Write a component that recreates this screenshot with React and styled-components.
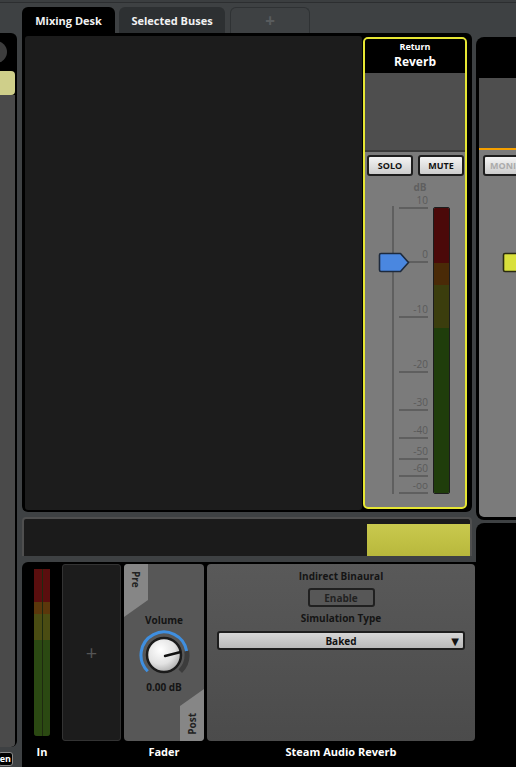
import React from "react";
import styled, { createGlobalStyle } from "styled-components";

const GlobalStyle = createGlobalStyle`
  html, body {
    margin: 0;
    padding: 0;
    background: #3e4143;
    overflow: hidden;
  }
  * { box-sizing: border-box; }
  body {
    font-family: "Open Sans", "DejaVu Sans", sans-serif;
  }
`;

const Page = styled.div`
  width: 516px;
  height: 767px;
  overflow: hidden;
  display: flex;
  flex-direction: column;
  background: #3e4143;
`;

const TopRule = styled.div`
  height: 3px;
  background: #3b3e40;
  border-bottom: 1px solid #2c2e30;
`;

const Columns = styled.div`
  flex: 1;
  display: flex;
  min-height: 0;
`;

/* ---------- left column ---------- */

const LeftCol = styled.div`
  width: 17px;
  flex-shrink: 0;
  display: flex;
  flex-direction: column;
`;

const SidePanel = styled.div`
  margin-top: 30px;
  height: 714px;
  background: #000;
  border-radius: 0 6px 6px 0;
  padding-right: 2px;
  display: flex;
  flex-direction: column;
  overflow: hidden;
`;

const SideTop = styled.div`
  height: 38px;
  display: flex;
  align-items: center;
`;

const SideCircle = styled.div`
  width: 22px;
  height: 22px;
  margin-left: -15px;
  border-radius: 50%;
  background: #3d3d3d;
`;

const SideTab = styled.div`
  height: 24px;
  background: #cfcf8a;
  border-radius: 0 4px 4px 0;
`;

const SideFill = styled.div`
  flex: 1;
  background: #4a4a4a;
  border-radius: 0 0 4px 0;
`;

const SideButton = styled.div`
  margin-top: 5px;
  margin-left: -2px;
  width: 15px;
  height: 14px;
  background: #000;
  border: 1px solid #8a8a8a;
  border-radius: 3px;
  color: #fff;
  font-size: 9px;
  font-weight: 700;
  line-height: 12px;
  text-align: right;
  padding-right: 1px;
`;

/* ---------- main column ---------- */

const MainCol = styled.div`
  width: 454px;
  margin-left: 5px;
  flex-shrink: 0;
  display: flex;
  flex-direction: column;
`;

const TabRow = styled.div`
  margin-top: 4px;
  height: 26px;
  display: flex;
  gap: 4px;
`;

const Tab = styled.div`
  width: ${(p) => p.$w}px;
  height: 26px;
  border-radius: 6px 6px 0 0;
  background: ${(p) => (p.$active ? "#000" : p.$ghost ? "transparent" : "#2d3032")};
  border: ${(p) => (p.$ghost ? "1px solid #2f3234" : "none")};
  border-bottom: none;
  color: ${(p) => (p.$ghost ? "#595c5e" : "#f2f2f2")};
  font-size: ${(p) => (p.$ghost ? "17px" : "11px")};
  font-weight: 700;
  display: flex;
  align-items: center;
  justify-content: center;
  margin-left: ${(p) => p.$ml || 0}px;
`;

const MixerPanel = styled.div`
  width: 450px;
  height: 479px;
  background: #000;
  border-radius: 0 6px 6px 6px;
  padding: 3px 5px 2px 3px;
  display: flex;
  gap: 1px;
`;

const DarkArea = styled.div`
  flex: 1;
  background: #1c1c1c;
  border-radius: 3px;
`;

/* ---------- channel strip ---------- */

const Strip = styled.div`
  width: 104px;
  margin: 1px 0;
  border: 2px solid #e6e633;
  border-radius: 5px;
  overflow: hidden;
  background: #7b7b7b;
  display: flex;
  flex-direction: column;
`;

const StripHeader = styled.div`
  height: 34px;
  background: #000;
  color: #fff;
  font-weight: 700;
  display: flex;
  flex-direction: column;
  align-items: center;
  padding-top: 2px;
`;

const SmallName = styled.div`
  font-size: 9px;
  line-height: 11px;
`;

const BigName = styled.div`
  margin-top: 2px;
  font-size: 12px;
  line-height: 15px;
`;

const StripSpace = styled.div`
  height: ${(p) => p.$h}px;
  background: #4e4e4e;
  border-bottom: 2px solid ${(p) => p.$line || "#3a3a3a"};
`;

const ButtonRow = styled.div`
  display: flex;
  gap: 5px;
  padding: 3px 0 4px 2px;
`;

const StripButton = styled.div`
  width: 46px;
  height: 21px;
  border: 2px solid #1d1d1d;
  border-radius: 3px;
  background: linear-gradient(#f4f4f4, #cdcdcd);
  color: ${(p) => (p.$disabled ? "#ababab" : "#111")};
  font-size: 9px;
  font-weight: 700;
  display: flex;
  align-items: center;
  justify-content: ${(p) => (p.$disabled ? "flex-start" : "center")};
  padding-left: ${(p) => (p.$disabled ? "5px" : "0")};
  flex-shrink: 0;
  white-space: nowrap;
`;

const FaderArea = styled.div`
  position: relative;
  height: 320px;
`;

const DbLabel = styled.div`
  position: absolute;
  left: 45px;
  top: 1px;
  width: 20px;
  text-align: center;
  font-size: 10px;
  font-weight: 700;
  line-height: 12px;
  color: #5f5f5f;
`;

const FaderLine = styled.div`
  position: absolute;
  left: 27px;
  top: 26px;
  width: 2px;
  height: 288px;
  background: #5f5f5f;
`;

const Tick = styled.div`
  position: absolute;
  left: 34px;
  width: 29px;
  height: 2px;
  background: #5f5f5f;
`;

const TickLabel = styled.div`
  position: absolute;
  right: 37px;
  font-size: 10px;
  line-height: 12px;
  color: #5a5a5a;
`;

const Meter = styled.div`
  position: absolute;
  left: 68px;
  top: 27px;
  width: 17px;
  height: 287px;
  border: 1px solid #1c1c1c;
  border-radius: 2px;
  overflow: hidden;
  display: flex;
  flex-direction: column;
`;

const MeterSeg = styled.div`
  flex: ${(p) => p.$f};
  background: ${(p) => p.$c};
`;

const HandleSpot = styled.div`
  position: absolute;
  left: 13px;
  top: 72px;
  width: 32px;
  height: 21px;
`;

/* ---------- right column ---------- */

const RightCol = styled.div`
  width: 60px;
  flex-shrink: 0;
  display: flex;
  flex-direction: column;
`;

const RightStrip = styled.div`
  margin-top: 34px;
  height: 483px;
  background: #000;
  border-radius: 8px 0 0 8px;
  padding: 0 0 3px 3px;
  display: flex;
  flex-direction: column;
`;

const RightHeader = styled.div`
  height: 41px;
`;

const RightBody = styled.div`
  flex: 1;
  background: #7b7b7b;
  border-radius: 0 0 0 5px;
  padding: 5px 0 0 4px;
`;

const RightHandle = styled.div`
  margin: 76px 0 0 19px;
  width: 32px;
  height: 21px;
`;

const RightBottom = styled.div`
  margin-top: 3px;
  flex: 1;
  background: #000;
  border-radius: 8px 0 0 0;
`;

/* ---------- bus bar ---------- */

const BusBar = styled.div`
  margin-top: 5px;
  width: 450px;
  height: 39px;
  background: #1b1b1b;
  border: 2px solid #4f4f4f;
  border-bottom: none;
  border-radius: 4px 4px 0 0;
  display: flex;
  justify-content: flex-end;
  align-items: flex-end;
`;

const BusFill = styled.div`
  width: 103px;
  height: 32px;
  background: linear-gradient(#c9c94e, #b8b83c);
`;

/* ---------- bottom section ---------- */

const BottomSection = styled.div`
  margin-top: 6px;
  flex: 1;
  background: #000;
  border-radius: 6px 0 0 0;
  padding-top: 2px;
  display: flex;
  align-items: flex-start;
`;

const ModuleCol = styled.div`
  display: flex;
  flex-direction: column;
  width: ${(p) => p.$w}px;
  margin-left: ${(p) => p.$ml || 0}px;
  padding: ${(p) => p.$pad || "0"};
  flex-shrink: 0;
`;

const ModuleLabel = styled.div`
  margin-top: 4px;
  text-align: center;
  color: #fff;
  font-size: 11px;
  font-weight: 700;
  line-height: 14px;
`;

const InMeter = styled.div`
  margin-top: 5px;
  height: 167px;
  margin-bottom: 5px;
  display: flex;
  gap: 1px;
  background: #1e2a10;
  border-radius: 0 0 3px 3px;
  overflow: hidden;
`;

const InBar = styled.div`
  flex: 1;
  display: flex;
  flex-direction: column;
`;

const PlusSlot = styled.div`
  height: 177px;
  background: #1c1c1c;
  border: 1px solid #333;
  border-radius: 3px;
  color: #555;
  font-size: 20px;
  display: flex;
  align-items: center;
  justify-content: center;
`;

const FaderBox = styled.div`
  position: relative;
  height: 177px;
  background: #575757;
  border-radius: 4px;
  overflow: hidden;
  display: flex;
  flex-direction: column;
  align-items: center;
  padding-top: 50px;
`;

const CornerTab = styled.div`
  position: absolute;
  width: 24px;
  background: #868686;
  display: flex;
  justify-content: center;
`;

const PreTab = styled(CornerTab)`
  left: 0;
  top: 0;
  height: 53px;
  clip-path: polygon(0 0, 100% 0, 100% 36px, 0 100%);
  align-items: flex-start;
  padding-top: 7px;
`;

const PostTab = styled(CornerTab)`
  right: 0;
  bottom: 0;
  height: 52px;
  clip-path: polygon(0 17px, 100% 0, 100% 100%, 0 100%);
  align-items: flex-end;
  padding-bottom: 6px;
`;

const TabText = styled.span`
  writing-mode: vertical-rl;
  transform: ${(p) => (p.$up ? "rotate(180deg)" : "none")};
  font-size: 10px;
  font-weight: 700;
  color: #222;
  line-height: 12px;
`;

const SmallText = styled.div`
  font-size: 10px;
  font-weight: 700;
  color: #141414;
  line-height: 12px;
  margin-top: ${(p) => p.$mt || 0}px;
`;

const KnobWrap = styled.div`
  margin-top: 3px;
  width: 52px;
  height: 52px;
`;

const SteamBox = styled.div`
  height: 177px;
  background: linear-gradient(#595959, #4b4b4b);
  border-radius: 4px;
  display: flex;
  flex-direction: column;
  align-items: center;
  padding: 6px 10px 0 10px;
`;

const EnableButton = styled.div`
  margin-top: 6px;
  width: 67px;
  height: 19px;
  border: 2px solid #202020;
  border-radius: 3px;
  background: #575757;
  font-size: 10px;
  font-weight: 700;
  color: #222;
  display: flex;
  align-items: center;
  justify-content: center;
`;

const Dropdown = styled.div`
  position: relative;
  margin-top: 7px;
  width: 100%;
  height: 19px;
  border: 2px solid #1d1d1d;
  border-radius: 3px;
  background: linear-gradient(#d6d6d6, #b9b9b9);
  font-size: 10px;
  font-weight: 700;
  color: #111;
  display: flex;
  align-items: center;
  justify-content: center;
`;

const Caret = styled.span`
  position: absolute;
  right: 4px;
  top: 1px;
  font-size: 10px;
  color: #111;
`;

/* ---------- drawings ---------- */

const FaderHandle = ({ color, edge }) => (
  <svg width="32" height="21" viewBox="0 0 32 21">
    <path
      d="M3 1.5 H22.5 L30.5 10.5 L22.5 19.5 H3 Q1.5 19.5 1.5 18 V3 Q1.5 1.5 3 1.5 Z"
      fill={color}
      stroke={edge}
      strokeWidth="1.6"
      strokeLinejoin="round"
    />
  </svg>
);

const polar = (deg, r) => {
  const a = (deg * Math.PI) / 180;
  return [26 + r * Math.sin(a), 26 - r * Math.cos(a)];
};

const Knob = ({ value }) => {
  const r = 23;
  const [sx, sy] = polar(-135, r);
  const [vx, vy] = polar(value, r);
  const [ex, ey] = polar(135, r);
  const [px, py] = polar(value, 16);
  return (
    <svg width="52" height="52" viewBox="0 0 52 52">
      <defs>
        <radialGradient id="knobFace" cx="40%" cy="35%" r="70%">
          <stop offset="0%" stopColor="#ffffff" />
          <stop offset="60%" stopColor="#e2e2e2" />
          <stop offset="100%" stopColor="#a8a8a8" />
        </radialGradient>
      </defs>
      <path d={`M${vx} ${vy} A${r} ${r} 0 0 1 ${ex} ${ey}`} fill="none" stroke="#3c3c3c" strokeWidth="5" />
      <path d={`M${sx} ${sy} A${r} ${r} 0 1 1 ${vx} ${vy}`} fill="none" stroke="#3f8fe0" strokeWidth="3" />
      <circle cx="26" cy="26" r="17" fill="url(#knobFace)" stroke="#1b1b1b" strokeWidth="2.5" />
      <line x1="27" y1="27" x2={px} y2={py} stroke="#111" strokeWidth="2.4" strokeLinecap="round" />
    </svg>
  );
};

const ticks = [
  { label: "10", y: 28 },
  { label: "0", y: 82 },
  { label: "-10", y: 137 },
  { label: "-20", y: 192 },
  { label: "-30", y: 230 },
  { label: "-40", y: 258 },
  { label: "-50", y: 279 },
  { label: "-60", y: 296 },
  { label: "-oo", y: 313 },
];

const stripMeter = [
  { f: 55, c: "#4b0909" },
  { f: 22, c: "#4a2a07" },
  { f: 43, c: "#3b3d0d" },
  { f: 166, c: "#1f3d0b" },
];

const inMeter = [
  { f: 33, c: "#5a0e0e" },
  { f: 12, c: "#5b370b" },
  { f: 26, c: "#4a4c12" },
  { f: 96, c: "#2b4912" },
];

const ChannelStrip = () => (
  <Strip>
    <StripHeader>
      <SmallName>Return</SmallName>
      <BigName>Reverb</BigName>
    </StripHeader>
    <StripSpace $h={79} />
    <ButtonRow>
      <StripButton>SOLO</StripButton>
      <StripButton>MUTE</StripButton>
    </ButtonRow>
    <FaderArea>
      <DbLabel>dB</DbLabel>
      <FaderLine />
      {ticks.map((t) => (
        <React.Fragment key={t.label}>
          <Tick style={{ top: t.y - 1 }} />
          <TickLabel style={{ top: t.y - 14 }}>{t.label}</TickLabel>
        </React.Fragment>
      ))}
      <Meter>
        {stripMeter.map((s, i) => (
          <MeterSeg key={i} $f={s.f} $c={s.c} />
        ))}
      </Meter>
      <HandleSpot>
        <FaderHandle color="#4a87e0" edge="#1d2a3d" />
      </HandleSpot>
    </FaderArea>
  </Strip>
);

export default function App() {
  return (
    <Page>
      <GlobalStyle />
      <TopRule />
      <Columns>
        <LeftCol>
          <SidePanel>
            <SideTop>
              <SideCircle />
            </SideTop>
            <SideTab />
            <SideFill />
          </SidePanel>
          <SideButton>en</SideButton>
        </LeftCol>

        <MainCol>
          <TabRow>
            <Tab $w={93} $active>Mixing Desk</Tab>
            <Tab $w={106}>Selected Buses</Tab>
            <Tab $w={80} $ghost $ml={1}>+</Tab>
          </TabRow>
          <MixerPanel>
            <DarkArea />
            <ChannelStrip />
          </MixerPanel>
          <BusBar>
            <BusFill />
          </BusBar>
          <BottomSection>
            <ModuleCol $w={40} $pad="0 12px">
              <InMeter>
                <InBar>
                  {inMeter.map((s, i) => (
                    <MeterSeg key={i} $f={s.f} $c={s.c} />
                  ))}
                </InBar>
                <InBar>
                  {inMeter.map((s, i) => (
                    <MeterSeg key={i} $f={s.f} $c={s.c} />
                  ))}
                </InBar>
              </InMeter>
              <ModuleLabel>In</ModuleLabel>
            </ModuleCol>
            <ModuleCol $w={59}>
              <PlusSlot>+</PlusSlot>
            </ModuleCol>
            <ModuleCol $w={80} $ml={3}>
              <FaderBox>
                <PreTab>
                  <TabText>Pre</TabText>
                </PreTab>
                <SmallText>Volume</SmallText>
                <KnobWrap>
                  <Knob value={80} />
                </KnobWrap>
                <SmallText>0.00 dB</SmallText>
                <PostTab>
                  <TabText $up>Post</TabText>
                </PostTab>
              </FaderBox>
              <ModuleLabel>Fader</ModuleLabel>
            </ModuleCol>
            <ModuleCol $w={268} $ml={3}>
              <SteamBox>
                <SmallText>Indirect Binaural</SmallText>
                <EnableButton>Enable</EnableButton>
                <SmallText $mt={5}>Simulation Type</SmallText>
                <Dropdown>
                  Baked
                  <Caret>▼</Caret>
                </Dropdown>
              </SteamBox>
              <ModuleLabel>Steam Audio Reverb</ModuleLabel>
            </ModuleCol>
          </BottomSection>
        </MainCol>

        <RightCol>
          <RightStrip>
            <RightHeader />
            <StripSpace $h={72} $line="#f5a000" />
            <RightBody>
              <StripButton $disabled>MONITOR</StripButton>
              <RightHandle>
                <FaderHandle color="#d9e03c" edge="#2a2a10" />
              </RightHandle>
            </RightBody>
          </RightStrip>
          <RightBottom />
        </RightCol>
      </Columns>
    </Page>
  );
}
